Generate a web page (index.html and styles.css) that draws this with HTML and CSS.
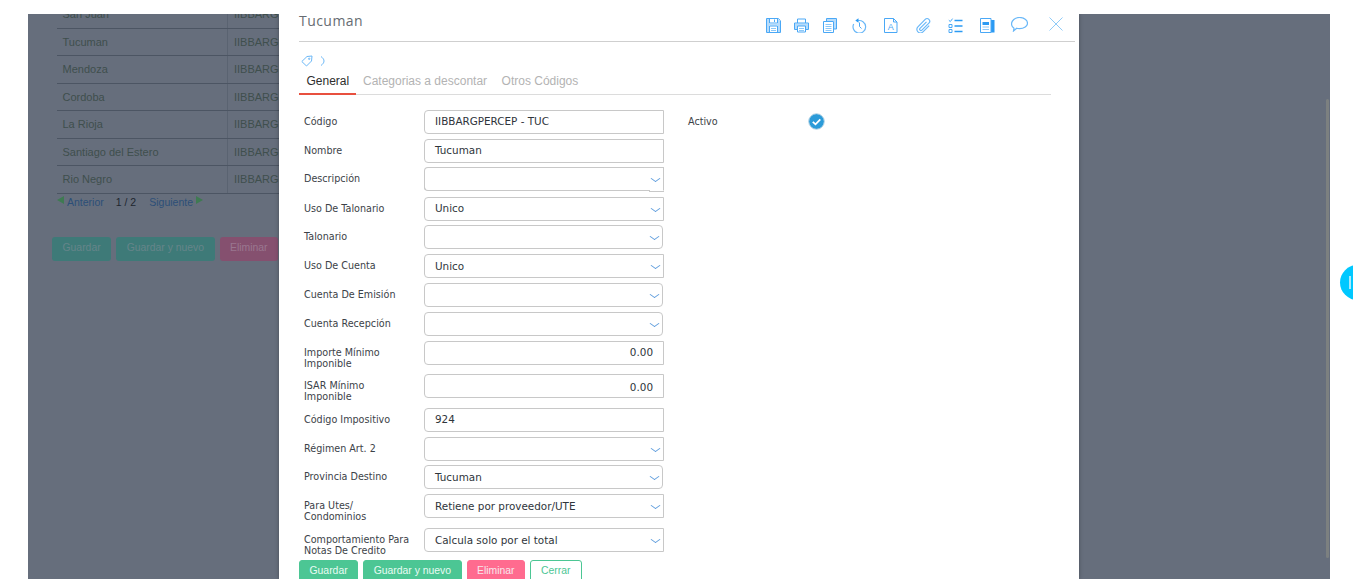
FILE: index.html
```html
<!DOCTYPE html>
<html lang="es">
<head>
<meta charset="utf-8">
<title>Tucuman</title>
<link rel="stylesheet" href="styles.css">
</head>
<body>
<main class="page">
  <div class="list">
    <div class="t-row"><span class="c1">San Juan</span><span class="c2">IIBBARGPERCEP - SJU</span></div>
    <div class="t-row"><span class="c1">Tucuman</span><span class="c2">IIBBARGPERCEP - TUC</span></div>
    <div class="t-row"><span class="c1">Mendoza</span><span class="c2">IIBBARGPERCEP - MDZ</span></div>
    <div class="t-row"><span class="c1">Cordoba</span><span class="c2">IIBBARGPERCEP - COR</span></div>
    <div class="t-row"><span class="c1">La Rioja</span><span class="c2">IIBBARGPERCEP - LRJ</span></div>
    <div class="t-row"><span class="c1">Santiago del Estero</span><span class="c2">IIBBARGPERCEP - SDE</span></div>
    <div class="t-row"><span class="c1">Rio Negro</span><span class="c2">IIBBARGPERCEP - RNG</span></div>
  </div>
  <div class="pager">
    <span class="tri tri-l"></span><a class="pg-link">Anterior</a>
    <span class="pg-num">1 / 2</span>
    <a class="pg-link">Siguiente</a><span class="tri tri-r"></span>
  </div>
  <div class="page-actions">
    <span class="dim-btn dim-green">Guardar</span>
    <span class="dim-btn dim-green">Guardar y nuevo</span>
    <span class="dim-btn dim-pink">Eliminar</span>
  </div>
  <div class="scroll-thumb"></div>
</main>

<div class="bubble"><span class="bubble-mark"></span></div>

<section class="modal">
  <header class="m-head">
    <h1 class="m-title">Tucuman</h1>
    <div class="m-icons">
      <svg class="ic" width="15" height="15" viewBox="0 0 15 15"><path class="f" d="M1 1h2.500v5h8V1h.5l2 2v11H1z"/><path class="s" d="M.5 .5h11.800l2.200 2.200v11.800H.5z"/><path class="s" d="M3.500 .5v4.500h8V.5M8.500 1.500v2.500"/><rect class="w" x="3" y="7.500" width="9" height="6.500"/><path class="s" d="M3.500 14V8h8v6"/><path class="t2" d="M5 10.500h5M5 12.500h5"/></svg>
      <svg class="ic g13" width="15" height="15" viewBox="0 0 15 15"><path class="s" d="M3.500 5V1h8v4"/><path class="f" d="M1 5.500h13v5.500H1z"/><path class="s" d="M3.500 11.500H.5V5h14v6.500h-3"/><rect class="w" x="3.500" y="8" width="8" height="6"/><path class="s" d="M3.500 8h8v6h-8z"/><path class="t2" d="M5 10.500h5M5 12.500h5"/></svg>
      <svg class="ic g14" width="14" height="15" viewBox="0 0 14 15"><path class="f" d="M3 1h10v10h-2V3H3z"/><path class="s" d="M3.500 3V.5h10v10.500H11"/><path class="s" d="M.5 3.500h10v11H.5z"/><path class="t2" d="M2.500 6.500h6M2.500 8.500h6M2.500 10.500h6M2.500 12.500h6"/></svg>
      <svg class="ic g15" width="15" height="15" viewBox="0 0 15 15"><path class="s2" d="M5.500 2.800A6.300 6.300 0 1 1 1.700 6"/><path class="b" d="M6.500 .2v4.600L3.300 2.500z"/><path class="s" d="M7.500 4.500v4l2 2"/></svg>
      <svg class="ic g17" width="14" height="15" viewBox="0 0 14 15"><path class="s" d="M.5 .5h9l3.500 3.500v10.500H.5z"/><path class="s" d="M9.500 .5V4H13"/><text class="ic-a" x="6.800" y="12">A</text></svg>
      <svg class="ic g18" width="15" height="15" viewBox="0 0 15 15"><path class="s2" d="M10.500 3.800L4 10.300a1.300 1.300 0 0 0 1.900 1.800l7-7a2.600 2.600 0 0 0-3.700-3.700L1.900 8.800a3.600 3.600 0 0 0 5.100 5.100l6.200-6.200"/></svg>
      <svg class="ic g17" width="15" height="15" viewBox="0 0 15 15"><path class="s" d="M.8 2.200l1.500 1.400L4.600.6"/><path class="s" d="M1 6.500h3v3H1zM1 11.500h3v3H1z"/><path class="t" d="M6.500 2.500h8M6.500 8h8M6.500 13.500h8"/></svg>
      <svg class="ic g17" width="15" height="15" viewBox="0 0 15 15"><rect class="b" x="11" y="2" width="3.500" height="12.500"/><path class="s" d="M.5 .5h10.500v14H.5z"/><rect class="b" x="2.500" y="4" width="6.500" height="3"/><path class="t2" d="M2.500 9h6.500M2.500 11.500h6.500"/></svg>
      <svg class="ic g16" width="17" height="15" viewBox="0 0 17 15"><path class="s2" d="M3 11.200C1.400 10.200.5 8.800.5 7c0-3.400 3.400-6.500 8-6.500s8 2.700 8 5.700-3.400 5.500-8 5.500c-1 0-2-.1-2.800-.4L2.500 14z"/></svg>
      <svg class="ic g21" width="14" height="14" viewBox="0 0 14 14"><path class="x" d="M.5 .5l13 13M13.500 .5l-13 13"/></svg>
    </div>
  </header>

  <div class="crumb">
    <svg width="12" height="12" viewBox="0 0 12 12"><path class="tag" d="M.8 6.500L6 1.500l5-.5-.5 5-5 5z"/><circle class="tag" cx="8.200" cy="3.800" r=".7"/></svg>
    <svg class="crumb-sep" width="5" height="10" viewBox="0 0 5 10"><path class="tag" d="M1 .5c2 1.500 3 3 3 4.500s-1 3-3 4.500"/></svg>
  </div>

  <nav class="tabs">
    <a class="tab tab-on">General</a>
    <a class="tab">Categorias a descontar</a>
    <a class="tab">Otros Códigos</a>
  </nav>

  <div class="form">
    <div class="form-main">
      <div class="row gap5"><label class="lbl">Código</label><div class="fld txt">IIBBARGPERCEP - TUC</div></div>
      <div class="row gap4"><label class="lbl">Nombre</label><div class="fld txt">Tucuman</div></div>
      <div class="row gap6"><label class="lbl">Descripción</label><div class="fld txt sel notch"><span class="notch-end"></span></div></div>
      <div class="row gap4"><label class="lbl">Uso De Talonario</label><div class="fld txt sel">Unico</div></div>
      <div class="row gap5"><label class="lbl">Talonario</label><div class="fld rnd sel"></div></div>
      <div class="row gap5"><label class="lbl">Uso De Cuenta</label><div class="fld txt sel low">Unico</div></div>
      <div class="row gap5"><label class="lbl">Cuenta De Emisión</label><div class="fld rnd sel"></div></div>
      <div class="row gap5"><label class="lbl">Cuenta Recepción</label><div class="fld rnd sel"></div></div>
      <div class="row gap9"><label class="lbl">Importe Mínimo Imponible</label><div class="fld txt num">0.00</div></div>
      <div class="row gap10"><label class="lbl">ISAR Mínimo<br>Imponible</label><div class="fld txt num lower">0.00</div></div>
      <div class="row gap5"><label class="lbl">Código Impositivo</label><div class="fld txt">924</div></div>
      <div class="row gap4"><label class="lbl">Régimen Art. 2</label><div class="fld txt sel"></div></div>
      <div class="row gap5"><label class="lbl">Provincia Destino</label><div class="fld rnd sel low">Tucuman</div></div>
      <div class="row gap10"><label class="lbl">Para Utes/<br>Condominios</label><div class="fld txt sel low">Retiene por proveedor/UTE</div></div>
      <div class="row"><label class="lbl">Comportamiento Para Notas De Credito</label><div class="fld txt sel low">Calcula solo por el total</div></div>
    </div>
    <div class="form-side">
      <label class="lbl side-lbl">Activo</label>
      <svg class="check" width="17" height="17" viewBox="0 0 17 17"><circle cx="8.500" cy="8.500" r="7.800" fill="#2b9bd9" stroke="#b9d6e6"/><path d="M4.800 8.800l2.700 2.500 4.800-5" fill="none" stroke="#fff" stroke-width="1.800"/></svg>
    </div>
  </div>

  <footer class="m-actions">
    <button class="btn btn-green">Guardar</button>
    <button class="btn btn-green">Guardar y nuevo</button>
    <button class="btn btn-pink">Eliminar</button>
    <button class="btn btn-line">Cerrar</button>
  </footer>
</section>
</body>
</html>
```

FILE: styles.css
```css
* { box-sizing: border-box; }
html, body { margin: 0; height: 579px; overflow: hidden; background: #fff; }
body { font-family: "Liberation Sans", Arial, sans-serif; position: relative; }

/* dimmed page behind the dialog */
.page {
  position: relative;
  width: 1302px;
  height: 565px;
  margin: 14px 0 0 28px;
  background: #666e7c;
  overflow: hidden;
}
.list { width: 500px; margin: -13px 0 0 29px; }
.t-row {
  display: flex;
  height: 27.5px;
  align-items: center;
  border-bottom: 1px solid #4c5563;
  font-size: 11px;
  color: #3f4f4d;
}
.c1 { width: 171px; height: 100%; padding-left: 5.500px; line-height: 27px; border-right: 1px solid #5a6371; }
.c2 { padding-left: 6px; }

.pager { display: flex; align-items: center; margin: 1px 0 0 29px; height: 14px; font-size: 10.500px; }
.tri { width: 0; height: 0; border-top: 4px solid transparent; border-bottom: 4px solid transparent; margin-top: -3px; }
.tri-l { border-right: 7px solid #3f7a52; margin-right: 3px; }
.tri-r { border-left: 7px solid #3f7a52; margin-left: 3px; }
.pg-link { color: #2c4f78; }
.pg-num { color: #20262f; margin: 0 13px 0 12px; }

.page-actions { display: flex; gap: 5px; margin: 28px 0 0 24px; }
.dim-btn { height: 24px; line-height: 22px; padding: 0 10.500px; border-radius: 3px; font-size: 10.400px; color: #66858a; }
.dim-green { background: #3e7a78; }
.dim-pink { background: #85506f; color: #9a7790; }

.scroll-thumb { position: absolute; left: 1298px; top: 85px; width: 3px; height: 459px; background: #7c8080; border-radius: 2px; }

.bubble { position: absolute; left: 1340px; top: 265px; width: 35px; height: 35px; border-radius: 50%; background: #00c8ff; }
.bubble-mark { position: absolute; left: 9px; top: 11px; width: 2px; height: 13px; background: #a8e8fb; }

/* dialog */
.modal {
  position: absolute;
  z-index: 1;
  left: 279px;
  top: 0;
  width: 800px;
  height: 579px;
  padding-left: 20px;
  background: #fff;
}
.modal::before {
  content: "";
  position: absolute;
  inset: 14px 0 0 0;
  z-index: -1;
  box-shadow: 0 0 4px rgba(0, 0, 0, .3);
  clip-path: inset(0 -6px 0 -6px);
}
.m-head {
  display: flex;
  justify-content: space-between;
  width: 776px;
  height: 42px;
  padding-right: 12px;
  border-bottom: 1px solid #cfcfcf;
}
.m-title { margin: 12px 0 0; font: 400 14px/18px "Open Sans", sans-serif; letter-spacing: .45px; color: #666c72; }
.m-icons { display: flex; align-items: flex-start; padding-top: 18px; }
.ic { display: block; flex: none; }
.ic .s { fill: none; stroke: #4aa8f6; stroke-width: 1; }
.ic .s2 { fill: none; stroke: #6ab8f8; stroke-width: 1.200; }
.ic .f { fill: #b7dcfb; }
.ic .w { fill: #fff; }
.ic .b { fill: #2b9af3; }
.ic .t { fill: none; stroke: #2b9af3; stroke-width: 1.600; }
.ic .t2 { fill: none; stroke: #8cc8f8; stroke-width: 1; }
.ic .x { fill: none; stroke: #8fcbf8; stroke-width: 1; }
.ic-a { font-size: 9px; fill: #4aa8f6; text-anchor: middle; font-family: "Liberation Sans", sans-serif; }
.g13 { margin-left: 13px; }
.g14 { margin-left: 14px; }
.g15 { margin-left: 15px; }
.g16 { margin-left: 16px; margin-top: -1px; }
.g17 { margin-left: 17px; }
.g18 { margin-left: 18px; }
.g21 { margin-left: 21px; margin-top: -1px; }

.crumb { display: flex; align-items: center; height: 14px; margin: 12px 0 0 2px; }
.crumb-sep { margin-left: 7px; }
.tag { fill: none; stroke: #6cb8f7; stroke-width: 1; }

.tabs { display: flex; width: 752px; height: 25px; margin-top: 2px; border-bottom: 1px solid #dcdcdc; }
.tab { height: 25px; padding: 0 7.500px 0 7px; line-height: 23px; font-size: 12px; color: #b3b3b3; }
.tab-on { color: #2d2d2d; border-bottom: 2px solid #e8503f; width: 57px; padding-left: 7.500px; }

.form { display: flex; margin-top: 15px; }
.form-main { width: 365px; }
.form-side { display: flex; margin-left: 24px; padding-top: 4px; }
.form-side .side-lbl { width: 120px; padding: 2px 0 0; }

.row { display: flex; height: 24px; }
.gap4 { margin-bottom: 4px; }
.gap5 { margin-bottom: 5px; }
.gap6 { margin-bottom: 6px; }
.gap9 { margin-bottom: 9px; }
.gap10 { margin-bottom: 10px; }

.lbl { width: 125px; padding: 6px 5px 0; font: 9.600px/11px "DejaVu Sans", sans-serif; color: #3c4248; flex: none; }
.fld {
  position: relative;
  height: 24px;
  padding: 0 10px;
  font: 10.400px/21px "DejaVu Sans", sans-serif;
  color: #2f353b;
  background: #fff;
  border: 1px solid #c8c8c8;
}
.low { line-height: 23px; }
.lower { line-height: 25px; }
.txt { width: 240px; border-radius: 4px 0 0 4px; }
.rnd { width: 239px; border-radius: 4px; }
.num { text-align: right; }
.sel::after {
  content: "";
  position: absolute;
  right: 4.500px;
  top: 7px;
  width: 6px;
  height: 6px;
  border-right: 1px solid #5b9bdc;
  border-bottom: 1px solid #5b9bdc;
  transform: scaleY(.7) rotate(45deg);
}
.notch { border-bottom-color: transparent; }
.notch::before {
  content: "";
  position: absolute;
  left: -1px;
  bottom: -1px;
  width: 225px;
  height: 5px;
  border-left: 1px solid #c8c8c8;
  border-bottom: 1px solid #c8c8c8;
  border-bottom-left-radius: 4px;
}
.notch-end { position: absolute; right: -1px; bottom: -2px; width: 15px; height: 1px; background: #c8c8c8; }

.m-actions { display: flex; gap: 5px; margin-top: 8px; }
.btn { height: 24px; padding: 0 9.500px 4px; border-radius: 3px; font: 10.400px "Liberation Sans", sans-serif; border: 1px solid transparent; color: #e9fbf3; }
.btn-green { background: #4cc694; border-color: #4cc694; }
.btn-pink { background: #ff6b8f; border-color: #ff6b8f; color: #f8e6ec; }
.btn-line { background: #fff; border-color: #4cc694; color: #4cc694; padding: 0 10px 4px; }

.check { display: block; margin-top: -1px; }
```
